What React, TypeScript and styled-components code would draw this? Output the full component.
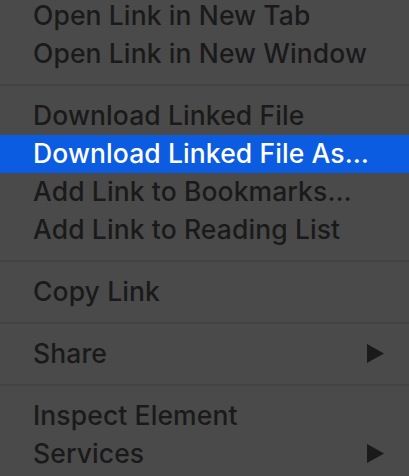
import React from "react";
import styled, { createGlobalStyle } from "styled-components";

const GlobalStyle = createGlobalStyle`
  html, body {
    margin: 0;
    padding: 0;
    background: #4a4a4a;
    overflow: hidden;
  }
`;

type Entry =
  | { kind: "item"; label: string; active?: boolean; submenu?: boolean }
  | { kind: "sep" };

const entries: Entry[] = [
  { kind: "item", label: "Open Link in New Tab" },
  { kind: "item", label: "Open Link in New Window" },
  { kind: "sep" },
  { kind: "item", label: "Download Linked File" },
  { kind: "item", label: "Download Linked File As…", active: true },
  { kind: "item", label: "Add Link to Bookmarks…" },
  { kind: "item", label: "Add Link to Reading List" },
  { kind: "sep" },
  { kind: "item", label: "Copy Link" },
  { kind: "sep" },
  { kind: "item", label: "Share", submenu: true },
  { kind: "sep" },
  { kind: "item", label: "Inspect Element" },
  { kind: "item", label: "Services", submenu: true },
];

const App = () => {
  return (
    <>
      <GlobalStyle />
      <Menu>
        {entries.map((e, i) =>
          e.kind === "sep" ? (
            <Separator key={i}>
              <Line />
            </Separator>
          ) : (
            <Item key={i} active={e.active}>
              <Label>{e.label}</Label>
              {e.submenu && (
                <Arrow viewBox="0 0 17 19">
                  <path d="M0 0 L17 9.5 L0 19 Z" fill="currentColor" />
                </Arrow>
              )}
            </Item>
          )
        )}
      </Menu>
    </>
  );
};

export default App;

const Menu = styled.div`
  width: 409px;
  margin-top: -3.5px;
  display: flex;
  flex-direction: column;
  background: #4a4a4a;
  font-family: "Inter", "Liberation Sans", sans-serif;
`;

const Item = styled.div<{ active?: boolean }>`
  height: 38px;
  display: flex;
  align-items: center;
  justify-content: space-between;
  padding: 0 25px 0 33px;
  background: ${({ active }) => (active ? "#0b5ce1" : "transparent")};
  color: ${({ active }) => (active ? "#ffffff" : "#1a1a1a")};
`;

const Label = styled.span`
  font-size: 26.5px;
  font-weight: 500;
  line-height: 36px;
  padding-bottom: 2px;
  letter-spacing: 0.1px;
  white-space: nowrap;
`;

const Arrow = styled.svg`
  width: 17px;
  height: 19px;
  color: #1a1a1a;
`;

const Separator = styled.div`
  height: 24px;
  display: flex;
  align-items: center;
`;

const Line = styled.div`
  width: 100%;
  height: 2px;
  background: #434343;
`;
